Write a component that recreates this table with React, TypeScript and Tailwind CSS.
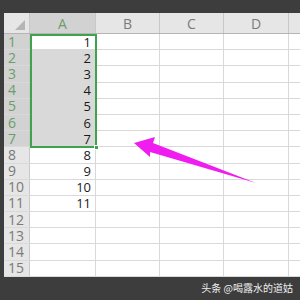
import React from 'react';

const cols = [
  { label: 'A', w: 'w-[66px]' },
  { label: 'B', w: 'w-[64px]' },
  { label: 'C', w: 'w-[64px]' },
  { label: 'D', w: 'w-[65px]' },
  { label: '', w: 'w-[20px]' },
];

const rows = Array.from({ length: 15 }, (_, i) => i + 1);

export default function App() {
  return (
    <div className="w-[300px] h-[300px] bg-[#3d3d3d] overflow-hidden relative flex flex-col" style={{ fontFamily: '"Open Sans", "Liberation Sans", sans-serif' }}>
      <div className="h-[13px] shrink-0" />

      <div className="ml-[4px] bg-white flex flex-col shrink-0 relative">
        {/* column header */}
        <div className="flex h-[21px] bg-[#e6e6e6] border-b border-[#b5b5b5]">
          <div className="w-[26px] shrink-0 border-r border-[#c8c8c8] relative">
            <svg className="absolute right-[4px] bottom-[3px]" width="10" height="10" viewBox="0 0 10 10">
              <polygon points="10,0 10,10 0,10" fill="#b5b5b5" />
            </svg>
          </div>
          {cols.map((c, i) => (
            <div
              key={i}
              className={`${c.w} shrink-0 border-r border-[#c8c8c8] flex items-center justify-center text-[14px] ${i === 0 ? 'bg-[#d2d2d2] text-[#6b9e6b]' : 'text-[#7a7a7a]'}`}
            >
              {c.label}
            </div>
          ))}
        </div>

        {rows.map((r) => {
          const sel = r <= 7;
          return (
            <div key={r} className="flex h-[16.2px] border-b border-[#d9d9d9]">
              <div
                className={`w-[26px] shrink-0 border-r border-[#c8c8c8] flex items-center pl-[4px] text-[14px] leading-[14px] ${sel ? 'bg-[#d2d2d2] text-[#6b9e6b]' : 'bg-[#e6e6e6] text-[#7a7a7a]'}`}
              >
                {r}
              </div>
              {cols.map((c, i) => (
                <div
                  key={i}
                  className={`${c.w} shrink-0 border-r border-[#d9d9d9] flex items-center justify-end pr-[4px] text-[13px] leading-[14px] text-[#1a1a1a] ${i === 0 && sel && r > 1 ? 'bg-[#d9d9d9]' : ''}`}
                >
                  {i === 0 && r <= 11 ? r : ''}
                </div>
              ))}
            </div>
          );
        })}

        {/* selection border A1:A7 */}
        <div className="absolute left-[26px] top-[21px] w-[67px] h-[114px] border-2 border-[#3fa34d] pointer-events-none">
          <div className="absolute -right-[4px] -bottom-[4px] w-[5px] h-[5px] bg-[#3fa34d] border border-white" />
        </div>
      </div>

      <div className="flex-1 flex flex-col">
        <div className="flex justify-end pr-[7px] pt-[6px] text-[10px] leading-none text-[#eeeeee]" style={{ fontFamily: '"Noto Sans CJK SC", sans-serif' }}>
          头条 @喝露水的道姑
        </div>
        <div className="mt-[8px] text-[14px] leading-none text-[#9a9a9a] whitespace-nowrap" style={{ fontFamily: '"Noto Sans CJK SC", sans-serif' }}>
          再将其拖动格子，如图
        </div>
      </div>

      {/* magenta arrow */}
      <svg className="absolute left-0 top-0 pointer-events-none" width="300" height="300" viewBox="0 0 300 300">
        <polygon points="134,143 155,137 153,143 256,183 150,152 150,157" fill="#f01df0" />
      </svg>
    </div>
  );
}
